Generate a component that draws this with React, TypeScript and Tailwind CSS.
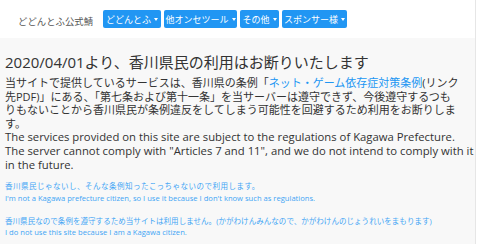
import React from 'react';

const font = { fontFamily: "'Open Sans', 'Noto Sans CJK JP', sans-serif" };

const NavButton: React.FC<{ label: string; width: string }> = ({ label, width }) => (
  <button className={`h-[18px] ${width} flex items-center justify-center gap-[3px] whitespace-nowrap rounded-[2px] bg-[#2196f3] text-white text-[9px] leading-none`}>
    <span>{label}</span>
    <span className="border-t-[3px] border-x-[2.5px] border-t-white border-x-transparent" />
  </button>
);

export default function App() {
  return (
    <div className="w-[480px] h-[244px] overflow-hidden bg-white" style={font}>
      <div className="w-[476px] h-full border-r border-[#e6e6e6] bg-[#f8f8f8]">
        <nav className="h-[38px] bg-white flex items-center pl-[18px]">
          <div className="w-[85px] shrink-0">
            <span className="text-[9.4px] text-[#555] leading-none whitespace-nowrap">どどんとふ公式鯖</span>
          </div>
          <div className="flex gap-[3px]">
            <NavButton label="どどんとふ" width="w-[58px]" />
            <NavButton label="他オンセツール" width="w-[73px]" />
            <NavButton label="その他" width="w-[39px]" />
            <NavButton label="スポンサー様" width="w-[65px]" />
          </div>
        </nav>
        <main className="pl-[5px] text-[#333]">
          <h1 className="text-[15px] leading-[20px] mt-[14px] mb-[4px]">2020/04/01より、香川県民の利用はお断りいたします</h1>
          <div className="text-[11px] leading-[13.6px] whitespace-nowrap">
            <div>当サイトで提供しているサービスは、香川県の条例「<span className="text-[#2196f3]">ネット・ゲーム依存症対策条例</span>(リンク</div>
            <div>先PDF)」にある、「第七条および第十一条」を当サーバーは遵守できず、今後遵守するつも</div>
            <div>りもないことから香川県民が条例違反をしてしまう可能性を回避するため利用をお断りしま</div>
            <div>す。</div>
          </div>
          <div className="text-[11.3px] leading-[13.6px] whitespace-nowrap">
            <div>The services provided on this site are subject to the regulations of Kagawa Prefecture.</div>
            <div>The server cannot comply with "Articles 7 and 11", and we do not intend to comply with it</div>
            <div>in the future.</div>
          </div>
          <div className="text-[#42a5f5] text-[7.6px] leading-[11.5px] whitespace-nowrap mt-[10px]">
            <div className="text-[7.5px] tracking-[0.5px]">香川県民じゃないし、そんな条例知ったこっちゃないので利用します。</div>
            <div>I'm not a Kagawa prefecture citizen, so I use it because I don't know such as regulations.</div>
            <div className="h-[11.5px]" />
            <div className="text-[7.5px] tracking-[0.05px]">香川県民なので条例を遵守するため当サイトは利用しません。(かがわけんみんなので、かがわけんのじょうれいをまもります)</div>
            <div>I do not use this site because I am a Kagawa citizen.</div>
          </div>
        </main>
      </div>
    </div>
  );
}
